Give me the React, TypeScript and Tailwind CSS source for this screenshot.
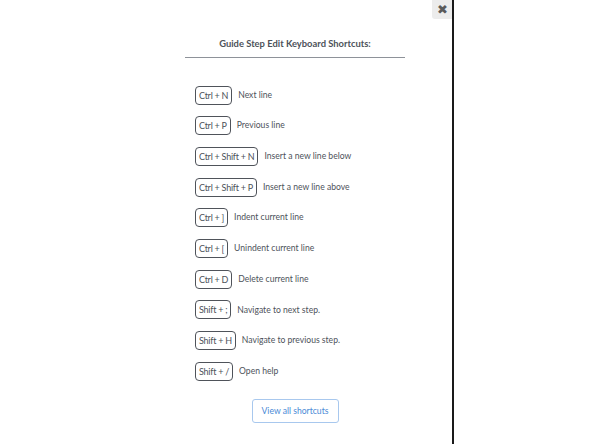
import React from "react";

const rows: [string, string][] = [
  ["Ctrl + N", "Next line"],
  ["Ctrl + P", "Previous line"],
  ["Ctrl + Shift + N", "Insert a new line below"],
  ["Ctrl + Shift + P", "Insert a new line above"],
  ["Ctrl + ]", "Indent current line"],
  ["Ctrl + [", "Unindent current line"],
  ["Ctrl + D", "Delete current line"],
  ["Shift + ;", "Navigate to next step."],
  ["Shift + H", "Navigate to previous step."],
  ["Shift + /", "Open help"],
];

export default function App() {
  return (
    <div className="w-[592px] h-[444px] bg-white flex justify-center overflow-hidden" style={{ fontFamily: "Lato, 'Open Sans', sans-serif" }}>
      <div className="relative w-[316px] h-[444px] bg-white border-r-2 border-[#1a1a1a] flex flex-col items-center">
        <button className="absolute right-0 top-0 w-[20px] h-[19px] bg-[#ececec] rounded-bl-[3px] flex items-center justify-center text-[#5a5a5a] text-[13px] leading-none">
          ✖
        </button>
        <div className="mt-[37px] text-[9.4px] font-bold text-[#4d525a] leading-[14px]">
          Guide Step Edit Keyboard Shortcuts:
        </div>
        <div className="mt-[6px] w-[220px] h-px bg-[#8e9299]" />
        <div className="mt-[28px] w-[220px] pl-[10px] flex flex-col gap-[12.7px]">
          {rows.map(([k, d]) => (
            <div key={k} className="flex items-center h-[18px]">
              <span className="h-[19px] px-[3px] flex items-center border border-[#4f535a] rounded-[4px] text-[9px] tracking-[-0.25px] text-[#4d525a] leading-none">
                {k}
              </span>
              <span className="ml-[6px] text-[8.6px] text-[#4d525a] leading-none">{d}</span>
            </div>
          ))}
        </div>
        <button className="mt-[19px] h-[24px] w-[87px] border border-[#a8c8ee] rounded-[3px] text-[8.6px] text-[#4a8ad6] leading-none">
          View all shortcuts
        </button>
      </div>
    </div>
  );
}
